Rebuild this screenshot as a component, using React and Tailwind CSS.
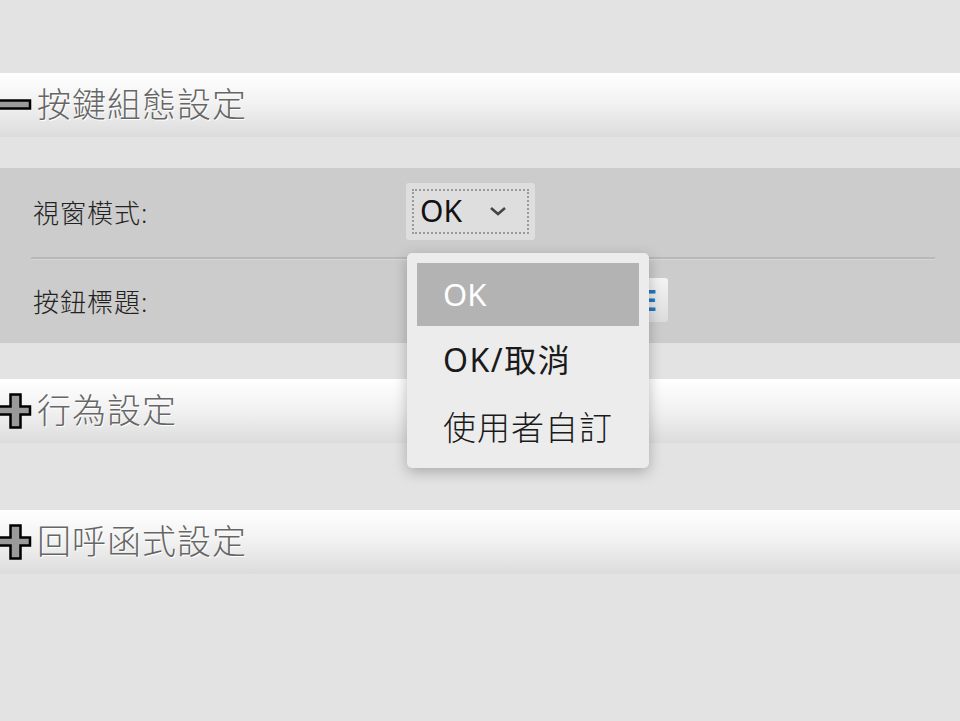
import React from "react";

const cjk = { fontFamily: '"Noto Sans", "Noto Sans CJK TC", sans-serif' };

function MinusIcon() {
  return (
    <svg width="32" height="12" viewBox="0 0 32 12" className="shrink-0">
      <rect x="-2" y="1.5" width="32" height="8" fill="#9a9a9a" stroke="#000" strokeWidth="2.5" />
    </svg>
  );
}

function PlusIcon() {
  return (
    <svg width="32" height="36" viewBox="0 0 32 36" className="shrink-0">
      <path
        d="M-2 13.5 H10.5 V1.5 H20.5 V13.5 H30 V21.5 H20.5 V34.5 H10.5 V21.5 H-2 Z"
        fill="#9a9a9a"
        stroke="#000"
        strokeWidth="2.5"
        strokeLinejoin="miter"
      />
    </svg>
  );
}

function Header({ icon, title }) {
  return (
    <div className="h-[64px] flex items-center bg-gradient-to-b from-white via-[#f1f1f1] to-[#dcdcdc]">
      <div className="w-[37px] flex items-center">{icon}</div>
      <span
        className="pb-[3px] text-[34px] font-light leading-none tracking-[1px] text-[#666] [text-shadow:1px_1px_0_#fff]"
        style={cjk}
      >
        {title}
      </span>
    </div>
  );
}

export default function App() {
  return (
    <div className="relative w-[960px] h-[721px] bg-[#e3e3e3] overflow-hidden" style={cjk}>
      <div className="h-[73px]" />
      <Header icon={<MinusIcon />} title="按鍵組態設定" />
      <div className="h-[31px]" />
      <div className="h-[175px] bg-[#cccccc] flex flex-col">
        <div className="h-[89px] flex items-center pl-[33px]">
          <span className="w-[373px] text-[26px] font-light leading-none tracking-[1px] text-[#222]">視窗模式:</span>
          <div className="mt-[-3px] w-[129px] h-[57px] bg-[#dedede] rounded-[3px] p-[6px]">
            <div className="h-full border-2 border-dotted border-[#9a9a9a] flex items-center pl-[6px] pr-[20px] justify-between">
              <span className="text-[30px] leading-none text-[#111]" style={{ fontFamily: '"Noto Sans", sans-serif' }}>OK</span>
              <svg width="18" height="12" viewBox="0 0 18 12">
                <path d="M2 3 L9 9 L16 3" fill="none" stroke="#444" strokeWidth="2.5" />
              </svg>
            </div>
          </div>
        </div>
        <div className="ml-[31px] mr-[25px] border-t-2 border-[#b8b8b8] border-b border-b-[#d6d6d6]" />
        <div className="flex-1 flex items-center pl-[33px]">
          <span className="w-[387px] text-[26px] font-light leading-none tracking-[1px] text-[#222]">按鈕標題:</span>
          <div className="mt-[-4px] w-[248px] h-[44px] rounded-[3px] bg-gradient-to-b from-[#f4f4f4] to-[#dcdcdc] flex items-center justify-end pr-[11px]">
            <span className="text-[28px] font-bold text-[#2a74c0]" style={{ fontFamily: '"Noto Sans", sans-serif' }}>TITLE</span>
          </div>
        </div>
      </div>
      <div className="h-[36px]" />
      <Header icon={<PlusIcon />} title="行為設定" />
      <div className="h-[67px]" />
      <Header icon={<PlusIcon />} title="回呼函式設定" />

      <div className="absolute left-[407px] top-[253px] w-[242px] bg-[#ececec] rounded-[5px] shadow-[0_4px_14px_rgba(0,0,0,0.25)] px-[10px] pt-[10px] pb-[8px]">
        <div className="h-[63px] bg-[#b3b3b3] flex items-center pl-[26px] text-[31px] leading-none text-white">OK</div>
        <div className="h-[68px] flex items-center pl-[26px] text-[32px] leading-none tracking-[1.5px] text-[#1a1a1a]">OK/取消</div>
        <div className="h-[66px] flex items-center pl-[26px] text-[33px] font-light leading-none tracking-[1px] text-[#1a1a1a]">使用者自訂</div>
      </div>
    </div>
  );
}
